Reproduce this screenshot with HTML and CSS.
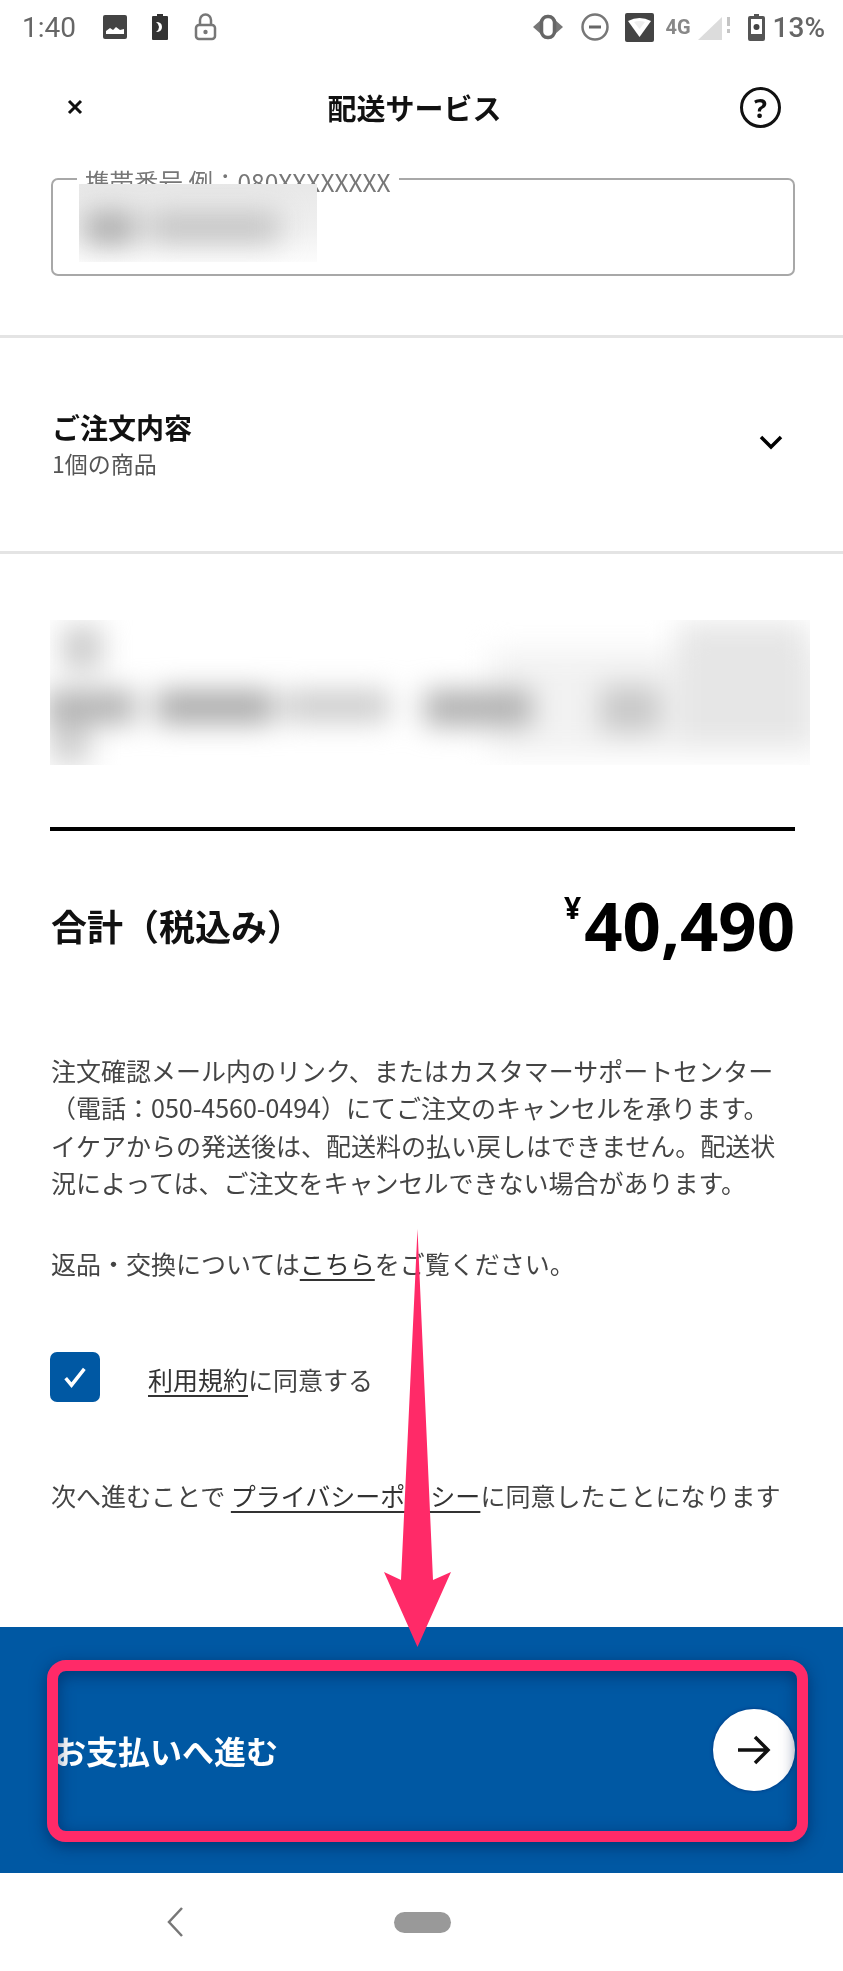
FILE: index.html
```html
<!DOCTYPE html>
<html lang="ja">
<head>
<meta charset="utf-8">
<title>配送サービス</title>
<link rel="stylesheet" href="styles.css">
</head>
<body>
<div class="page">
  <div class="shot">
    <div class="status">
      <div class="status-left">
        <span class="clock">1:40</span>
        <svg class="ic ic-image" viewBox="0 0 24 24"><rect x="0" y="0" width="24" height="24" rx="2" fill="#444"/><path d="M3 19v-3l4-3 3 2 3-3 4 3 4-1v5z" fill="#fff"/></svg>
        <svg class="ic ic-batt" viewBox="0 0 16 26"><path d="M5 0h6v2h4a1 1 0 0 1 1 1v22a1 1 0 0 1-1 1H1a1 1 0 0 1-1-1V3a1 1 0 0 1 1-1h4z" fill="#333"/><path d="M4 8q6 0 6 5t-6 5q3-2 3-5t-3-5z" fill="#fff"/></svg>
        <svg class="ic ic-lock" viewBox="0 0 23 28"><path d="M6 12V7a5.500 5.500 0 0 1 11 0v5" fill="none" stroke="#777" stroke-width="2.500"/><rect x="2" y="12" width="19" height="14" rx="3" fill="none" stroke="#777" stroke-width="2.500"/><circle cx="11.500" cy="19" r="2.200" fill="#777"/></svg>
      </div>
      <div class="status-right">
        <svg class="ic ic-vib" viewBox="0 0 30 26"><path d="M0 13l9-8v16zM30 13l-9-8v16z" fill="#777"/><rect x="8.500" y="2.500" width="13" height="21" rx="6" fill="#fff" stroke="#666" stroke-width="3.500"/></svg>
        <svg class="ic ic-dnd" viewBox="0 0 28 28"><circle cx="14" cy="14" r="12.500" fill="none" stroke="#777" stroke-width="2.500"/><rect x="8" y="12.500" width="12" height="3" fill="#666"/></svg>
        <svg class="ic ic-wifi" viewBox="0 0 29 29"><rect width="29" height="29" rx="2" fill="#444"/><path d="M3 8q11.500-6 23 0L14.500 24z" fill="#fff"/><path d="M9 9q5.500-2 11 0l-5.500 7z" fill="#eee"/></svg>
        <span class="net">4G</span>
        <svg class="ic ic-signal" viewBox="0 0 33 26"><path d="M0 26L24 3v23z" fill="#dcdcdc"/><rect x="29" y="3" width="3" height="9" fill="#c4c4c4"/><rect x="29" y="15" width="3" height="4" fill="#c4c4c4"/></svg>
        <svg class="ic ic-batt2" viewBox="0 0 17 27"><path d="M6 0h5v2h4a2 2 0 0 1 2 2v21a2 2 0 0 1-2 2H2a2 2 0 0 1-2-2V4a2 2 0 0 1 2-2h4z" fill="#555"/><rect x="3" y="5" width="11" height="15" fill="#fff"/><circle cx="8.500" cy="13" r="3" fill="#444"/></svg>
        <span class="pct">13%</span>
      </div>
    </div>

    <header class="topbar">
      <svg class="close" viewBox="0 0 16 16"><path d="M2 2l12 12M14 2L2 14" stroke="#111" stroke-width="3"/></svg>
      <h1 class="title">配送サービス</h1>
      <span class="help">?</span>
    </header>

    <section class="form">
      <div class="field">
        <span class="field-label">携帯番号 例：080XXXXXXXX</span>
        <div class="redact redact-phone"><div class="redact-ink redact-ink-phone"></div></div>
      </div>
    </section>

    <section class="order">
      <div class="order-text">
        <h2 class="order-title">ご注文内容</h2>
        <p class="order-sub">1個の商品</p>
      </div>
      <svg class="chevron" viewBox="0 0 24 15"><path d="M2 2l10 10L22 2" fill="none" stroke="#000" stroke-width="3.500"/></svg>
    </section>

    <div class="redact redact-address"><div class="redact-ink redact-ink-address"></div></div>
    <div class="rule"></div>

    <div class="total">
      <span class="total-label">合計（税込み）</span>
      <span class="price"><span class="yen">¥</span>40,490</span>
    </div>

    <p class="copy terms">注文確認メール内のリンク、またはカスタマーサポートセンター<br>（電話：050-4560-0494）にてご注文のキャンセルを承ります。<br>イケアからの発送後は、配送料の払い戻しはできません。配送状<br>況によっては、ご注文をキャンセルできない場合があります。</p>
    <p class="copy returns">返品・交換については<a class="link" href="#">こちら</a>をご覧ください。</p>

    <div class="agree">
      <span class="checkbox"><svg viewBox="0 0 24 24"><path d="M4 13l5 6L20 5" fill="none" stroke="#fff" stroke-width="3"/></svg></span>
      <span class="copy agree-text"><a class="link" href="#">利用規約</a>に同意する</span>
    </div>

    <p class="copy privacy">次へ進むことで <a class="link" href="#">プライバシーポリシー</a>に同意したことになります</p>

    <div class="cta">
      <span class="cta-label">お支払いへ進む</span>
      <span class="cta-circle"><svg viewBox="0 0 34 34"><path d="M1 17h30M18 4l13 13-13 13" fill="none" stroke="#111" stroke-width="3.500"/></svg></span>
    </div>

    <nav class="navbar">
      <svg class="nav-back" viewBox="0 0 16 30"><path d="M15 1L2 15l13 14" fill="none" stroke="#777" stroke-width="2.500"/></svg>
      <span class="nav-home"></span>
    </nav>
  </div>

  <div class="highlight"></div>
  <svg class="pointer" viewBox="0 0 68 418"><path d="M33.500 0L49 351 67 343 33.500 418 0 343 17 351z" fill="#ff2a68"/></svg>
</div>
</body>
</html>
```
FILE: styles.css
```css
* { box-sizing: border-box; }
html, body { margin: 0; padding: 0; background: #fff; }
body { font-family: "Noto Sans CJK JP", "Noto Sans", sans-serif; color: #111; }
h1, h2, p { margin: 0; }

.page { position: relative; width: 843px; height: 1971px; overflow: hidden; background: #fff; }
.shot { display: flex; flex-direction: column; height: 100%; filter: blur(0.7px); }

.status { flex: none; height: 54px; display: flex; align-items: center; justify-content: space-between; padding: 0 18px 0 22px; color: #666; font-family: "Roboto", sans-serif; }
.status-left, .status-right { display: flex; align-items: center; }
.clock { font-size: 28px; width: 56px; }
.ic { display: block; flex: none; }
.ic-image { width: 24px; height: 24px; margin-left: 25px; }
.ic-batt { width: 16px; height: 26px; margin-left: 25px; }
.ic-lock { width: 23px; height: 28px; margin-left: 26px; }
.ic-vib { width: 30px; height: 26px; }
.ic-dnd { width: 28px; height: 28px; margin-left: 18px; }
.ic-wifi { width: 29px; height: 29px; margin-left: 16px; }
.net { font-size: 20px; font-weight: 700; color: #888; width: 27px; margin-left: 12px; }
.ic-signal { width: 33px; height: 26px; margin-left: 5px; }
.ic-batt2 { width: 17px; height: 27px; margin-left: 17px; }
.pct { font-size: 28px; font-weight: 500; margin-left: 8px; }

.topbar { flex: none; height: 106px; display: flex; align-items: center; justify-content: space-between; padding: 0 62px 0 67px; }
.close { width: 16px; height: 16px; }
.title { font-size: 29px; font-weight: 700; line-height: 36px; margin-left: 6px; }
.help { width: 41px; height: 41px; border: 3px solid #111; border-radius: 50%; display: flex; align-items: center; justify-content: center; font-family: "Noto Sans", sans-serif; font-size: 27px; font-weight: 700; line-height: 1; }

.form { flex: none; height: 178px; padding: 18px 48px 0 51px; border-bottom: 3px solid #e4e4e4; }
.field { position: relative; height: 98px; border: 2px solid #a8a8a8; border-radius: 7px; }
.field-label { position: absolute; left: 24px; top: -11px; padding: 0 8px; background: #fff; font-size: 24.500px; line-height: 26px; color: #777; white-space: nowrap; }

.redact { overflow: hidden; }
.redact-ink { filter: blur(14px); margin: -30px; background-repeat: no-repeat; }
.redact-phone { position: absolute; left: 26px; top: 4px; width: 238px; height: 78px; background: linear-gradient(#e8e8e8, #efefef 55%, #fcfcfc); }
.redact-ink-phone { height: 138px;
  background-image: linear-gradient(#aaa, #aaa), linear-gradient(#c2c2c2, #c2c2c2);
  background-size: 50px 32px, 130px 30px;
  background-position: 36px 58px, 100px 58px; }
.redact-address { flex: none; margin-top: 66px; margin-left: 50px; width: 760px; height: 145px; }
.redact-ink-address { height: 205px;
  background-image:
    linear-gradient(#cccccc, #cccccc),
    linear-gradient(#b2b2b2, #b2b2b2), linear-gradient(#aaaaaa, #aaaaaa), linear-gradient(#cccccc, #cccccc), linear-gradient(#b0b0b0, #b0b0b0), linear-gradient(#c8c8c8, #c8c8c8),
    linear-gradient(#d0d0d0, #d0d0d0),
    linear-gradient(#e6e6e6, #e6e6e6),
    linear-gradient(#f2f2f2, #f2f2f2);
  background-size: 40px 44px, 90px 34px, 118px 34px, 106px 32px, 108px 36px, 60px 46px, 40px 40px, 130px 120px, 340px 105px;
  background-position: 42px 36px, 26px 100px, 136px 100px, 264px 100px, 404px 100px, 580px 96px, 30px 134px, 658px 32px, 470px 60px; }

.order { flex: none; height: 216px; display: flex; align-items: center; justify-content: space-between; padding: 0 60px 0 52px; border-bottom: 3px solid #e4e4e4; }
.order-title { font-size: 28px; font-weight: 700; line-height: 36px; }
.order-sub { font-size: 23px; line-height: 34px; color: #555; margin-top: 1px; }
.chevron { width: 24px; height: 15px; margin-top: -4px; }

.rule { flex: none; height: 4px; margin: 62px 48px 0 50px; background: #000; }

.total { flex: none; height: 80px; margin: 54px 50px 0 51px; display: flex; align-items: center; justify-content: space-between; }
.total-label { font-size: 36px; font-weight: 700; line-height: 44px; }
.price { display: flex; align-items: flex-start; font-family: "Noto Sans", sans-serif; font-size: 67px; font-weight: 700; line-height: 80px; color: #000; margin-right: -2px; }
.yen { font-size: 30px; line-height: 30px; margin-top: 8px; margin-right: 3px; }

.copy { font-size: 25px; line-height: 37.300px; color: #444; }
.link { color: #333; text-decoration: underline; text-underline-offset: 5px; text-decoration-thickness: 2px; }
.terms { flex: none; margin: 87px 0 0 51px; white-space: nowrap; }
.returns { flex: none; margin: 44px 48px 0 51px; }

.agree { flex: none; margin: 70px 0 0 50px; height: 50px; display: flex; align-items: center; gap: 48px; }
.agree-text { padding-top: 4px; }
.checkbox { width: 50px; height: 50px; border-radius: 7px; background: #0058a3; display: flex; align-items: center; justify-content: center; }
.checkbox svg { width: 28px; height: 28px; display: block; }
.privacy { flex: none; margin: 75px 40px 0 51px; white-space: nowrap; }

.cta { flex: none; margin-top: auto; height: 246px; background: #0058a3; display: flex; align-items: center; justify-content: space-between; padding: 0 48px 0 54px; }
.cta-label { font-size: 32px; font-weight: 700; color: #fff; line-height: 44px; }
.cta-circle { width: 82px; height: 82px; border-radius: 50%; background: radial-gradient(circle at 40% 50%, #fff 70%, #e8e8e8); box-shadow: 0 0 3px 1px #003f8a; display: flex; align-items: center; justify-content: center; }
.cta-circle svg { width: 34px; height: 34px; display: block; }

.navbar { flex: none; height: 98px; display: flex; align-items: center; padding-left: 167px; gap: 211px; }
.nav-back { width: 16px; height: 30px; }
.nav-home { width: 57px; height: 21px; border-radius: 11px; background: #999; }

.highlight { position: absolute; left: 47px; top: 1660px; width: 761px; height: 182px; border: 11px solid #ff2a68; border-radius: 19px; box-shadow: 0 4px 16px rgba(0, 30, 80, .6), inset 0 4px 16px rgba(0, 30, 80, .55); }
.pointer { position: absolute; left: 383.500px; top: 1229px; width: 68px; height: 418px; }
```
